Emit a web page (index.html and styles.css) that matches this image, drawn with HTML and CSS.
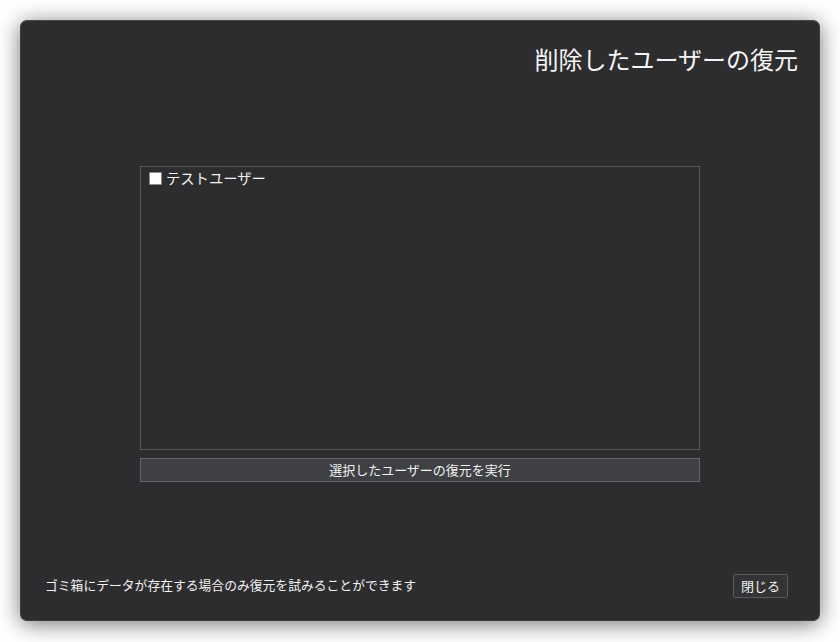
FILE: index.html
```html
<!DOCTYPE html>
<html lang="ja">
<head>
<meta charset="utf-8">
<link rel="stylesheet" href="styles.css">
</head>
<body>
<div class="dialog">
  <div class="header"><h1 class="title">削除したユーザーの復元</h1></div>
  <div class="content">
    <div class="list">
      <label class="item"><span class="check"></span><span class="name">テストユーザー</span></label>
    </div>
    <button class="restore">選択したユーザーの復元を実行</button>
  </div>
  <div class="footer">
    <span class="note">ゴミ箱にデータが存在する場合のみ復元を試みることができます</span>
    <button class="close">閉じる</button>
  </div>
</div>
</body>
</html>
```
FILE: styles.css
```css
html, body {
  margin: 0;
  padding: 0;
  background: #ffffff;
}
body {
  box-sizing: border-box;
  min-height: 642px;
  padding: 20px 0 0 20px;
  font-family: "Noto Sans CJK JP", "Noto Sans", sans-serif;
  color: #f2f2f2;
}
.dialog {
  box-sizing: border-box;
  width: 800px;
  height: 601px;
  background: #2d2d2f;
  border: 1px solid #3c3c3e;
  border-top-color: #4a4a4c;
  border-radius: 7px;
  box-shadow: 0 3px 22px rgba(0, 0, 0, 0.55);
  display: flex;
  flex-direction: column;
}
.header {
  display: flex;
  justify-content: flex-end;
  padding: 18px 21px 0 0;
}
.title {
  margin: 0;
  font-size: 24px;
  font-weight: normal;
  line-height: 40px;
  color: #f5f5f5;
}
.content {
  display: flex;
  flex-direction: column;
  align-items: center;
  margin-top: 87px;
  gap: 8px;
}
.list {
  box-sizing: border-box;
  width: 560px;
  height: 284px;
  border: 1px solid #58585a;
  padding: 1px 8px;
}
.item {
  display: flex;
  align-items: center;
  gap: 4px;
  font-size: 14.3px;
  line-height: 20px;
}
.check {
  box-sizing: border-box;
  width: 13px;
  height: 13px;
  background: #ffffff;
  border: 1px solid #8a8a8a;
  border-radius: 1px;
}
.restore {
  box-sizing: border-box;
  width: 560px;
  height: 24px;
  background: #3f4044;
  border: 1px solid #646568;
  color: #f2f2f2;
  font-family: inherit;
  font-size: 13px;
  padding: 0;
  line-height: 20px;
}
.footer {
  margin-top: auto;
  display: flex;
  align-items: center;
  justify-content: space-between;
  padding: 0 31px 22px 24px;
}
.note {
  font-size: 12.8px;
  line-height: 18px;
  margin-top: -2px;
}
.close {
  box-sizing: border-box;
  width: 55px;
  height: 24px;
  background: #333335;
  border: 1px solid #5c5c5e;
  border-radius: 2px;
  color: #f2f2f2;
  font-family: inherit;
  font-size: 13px;
  padding: 0;
  line-height: 20px;
}
```
